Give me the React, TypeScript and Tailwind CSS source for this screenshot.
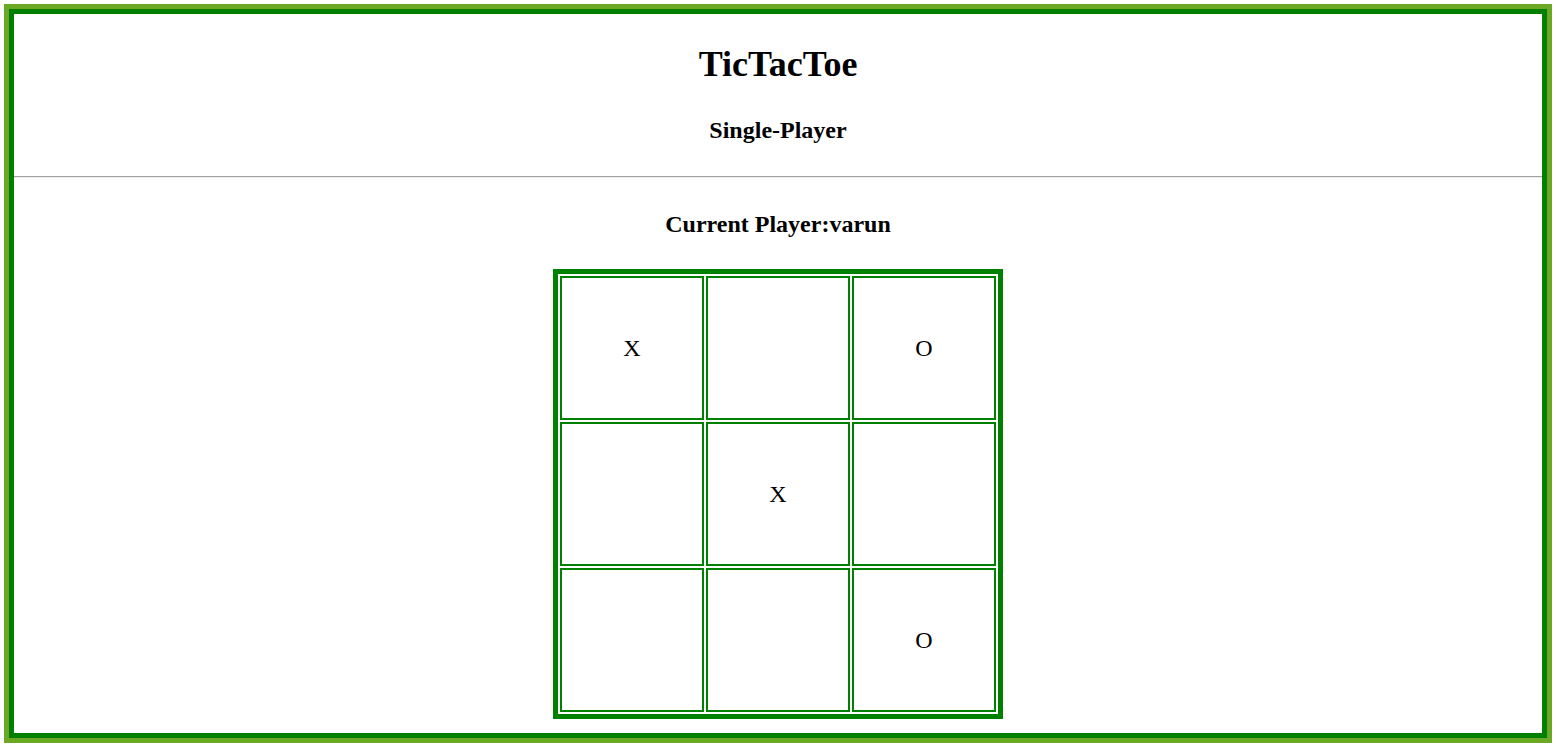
const board: string[][] = [
  ['X', '', 'O'],
  ['', 'X', ''],
  ['', '', 'O'],
];

const Cell: React.FC<{ value: string }> = ({ value }) => (
  <div className="w-[144px] h-[144px] border-2 border-[#008000] flex items-center justify-center text-[24px] leading-none">
    {value}
  </div>
);

export default function App() {
  return (
    <div className="h-[746px] px-1 pt-1 pb-[3px] bg-white overflow-hidden font-['Liberation_Serif',serif] text-black">
      <div className="h-full border-[5px] border-[#6ba823]">
        <div className="h-full border-[5px] border-[#008000] flex flex-col items-center">
          <h1 className="mt-[30px] text-[36px] leading-[40px] font-bold">TicTacToe</h1>
          <h2 className="mt-[32px] text-[24px] leading-[28px] font-bold">Single-Player</h2>
          <div className="mt-[32px] w-full border-t border-t-[#a0a0a0] border-b border-b-[#eeeeee]" />
          <h2 className="mt-[32px] text-[24px] leading-[28px] font-bold">Current Player:varun</h2>
          <div className="mt-[31px] border-[5px] border-[#008000] p-[2px]">
            <div className="grid grid-cols-3 gap-[2px]">
              {board.flat().map((v, i) => (
                <Cell key={i} value={v} />
              ))}
            </div>
          </div>
        </div>
      </div>
    </div>
  );
}
